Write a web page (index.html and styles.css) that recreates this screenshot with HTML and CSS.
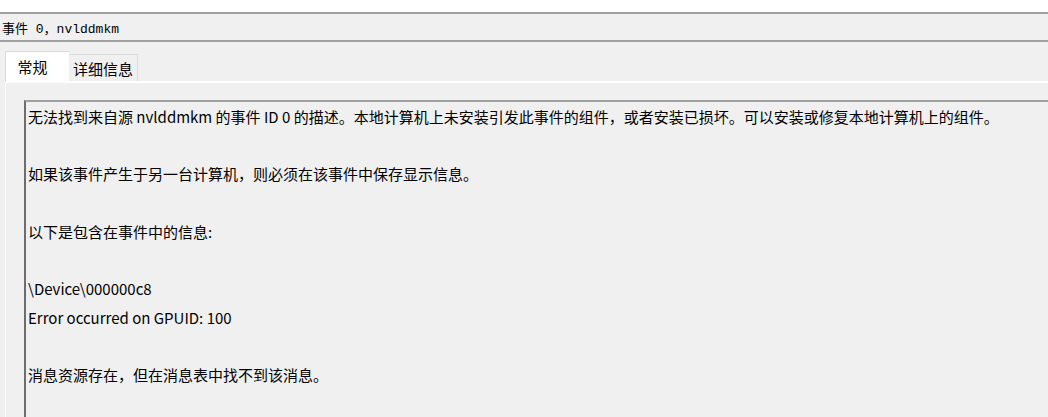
FILE: index.html
```html
<!DOCTYPE html>
<html lang="zh-CN">
<head>
    <meta charset="UTF-8">
    <title>事件 0，nvlddmkm</title>
    <link rel="stylesheet" href="styles.css">
</head>
<body>

<div class="top-gap"></div>

<div class="title-bar">
    <span class="title-text">事件 0，nvlddmkm</span>
</div>

<div class="tabs">
    <div class="tab active">常规</div>
    <div class="tab">详细信息</div>
</div>

<div class="tab-page">
    <div class="message-box">
        <p class="gap">无法找到来自源 nvlddmkm 的事件 ID 0 的描述。本地计算机上未安装引发此事件的组件，或者安装已损坏。可以安装或修复本地计算机上的组件。</p>
        <p class="gap">如果该事件产生于另一台计算机，则必须在该事件中保存显示信息。</p>
        <p class="gap">以下是包含在事件中的信息:</p>
        <p>\Device\000000c8</p>
        <p class="gap">Error occurred on GPUID: 100</p>
        <p>消息资源存在，但在消息表中找不到该消息。</p>
    </div>
</div>

</body>
</html>
```

FILE: styles.css
```css
* {
    margin: 0;
    padding: 0;
    box-sizing: border-box;
}

body {
    background-color: #f0f0f0;
    font-family: "Noto Sans CJK SC", sans-serif;
    color: #000;
    height: 417px;
    overflow: hidden;
}

.top-gap {
    height: 12px;
    background-color: #fff;
}

.title-bar {
    height: 30px;
    border-top: 2px solid #a0a0a0;
    border-bottom: 2px solid #a0a0a0;
    display: flex;
    align-items: center;
    padding-left: 2px;
}

.title-text {
    font-family: "Liberation Mono", "Noto Sans CJK SC", monospace;
    font-size: 13px;
}

.tabs {
    display: flex;
    align-items: flex-end;
    height: 39px;
    padding-left: 5px;
}

.tab {
    height: 27px;
    width: 69px;
    border: 1px solid #d9d9d9;
    border-left: none;
    border-bottom: none;
    font-size: 15px;
    display: flex;
    align-items: center;
    justify-content: center;
    padding-top: 1px;
}

.tab.active {
    width: 64px;
    height: 31px;
    border-left: 1px solid #d9d9d9;
    border-right: none;
    background-color: #fff;
    margin-bottom: -1px;
    position: relative;
    padding-top: 0;
    padding-bottom: 2px;
    padding-right: 10px;
}

.tab-page {
    margin-left: 5px;
    border-top: 2px solid #fff;
    border-left: 1px solid #fbfbfb;
    padding: 17px 0 0 18px;
    height: 336px;
}

.message-box {
    height: 100%;
    border-top: 2px solid #a0a0a0;
    border-left: 2px solid #6d6d6d;
    padding: 1px 0 0 2px;
    font-size: 15px;
    line-height: 28.7px;
    white-space: nowrap;
}

.message-box .gap {
    margin-bottom: 28.7px;
}
```
